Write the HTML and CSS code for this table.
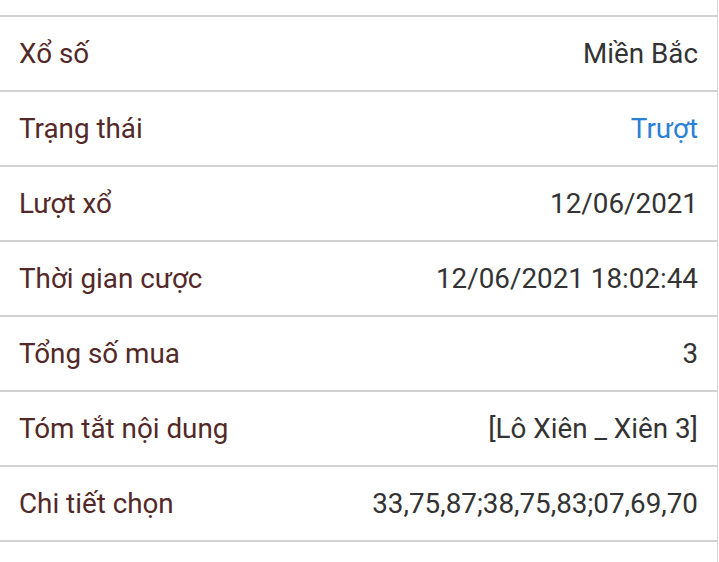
FILE: index.html
```html
<!DOCTYPE html>
<html lang="vi">
<head>
<meta charset="utf-8">
<link rel="stylesheet" href="styles.css">
</head>
<body>
<div class="page">
  <div class="list">
    <div class="row"><span class="label">Xổ số</span><span class="value">Miền Bắc</span></div>
    <div class="row"><span class="label">Trạng thái</span><span class="value status">Trượt</span></div>
    <div class="row"><span class="label">Lượt xổ</span><span class="value">12/06/2021</span></div>
    <div class="row"><span class="label">Thời gian cược</span><span class="value">12/06/2021 18:02:44</span></div>
    <div class="row"><span class="label">Tổng số mua</span><span class="value">3</span></div>
    <div class="row"><span class="label">Tóm tắt nội dung</span><span class="value">[Lô Xiên _ Xiên 3]</span></div>
    <div class="row"><span class="label">Chi tiết chọn</span><span class="value">33,75,87;38,75,83;07,69,70</span></div>
  </div>
</div>
</body>
</html>
```
FILE: styles.css
```css
html, body {
  margin: 0;
  padding: 0;
  background: #ffffff;
}
.page {
  width: 718px;
  height: 562px;
  border-right: 1px solid #d6d6d6;
  font-family: Roboto, "Noto Sans", sans-serif;
  font-size: 27.8px;
  padding-top: 15px;
  box-sizing: border-box;
}
.list {
  display: flex;
  flex-direction: column;
}
.row {
  display: flex;
  align-items: center;
  justify-content: space-between;
  height: 73px;
  padding: 0 19px 0 19px;
  border-top: 2px solid #d2d2d2;
}
.row:last-child {
  border-bottom: 2px solid #d2d2d2;
}
.label {
  color: #532828;
}
.value {
  color: #333333;
}
.status {
  color: #2a7fd6;
}
```
